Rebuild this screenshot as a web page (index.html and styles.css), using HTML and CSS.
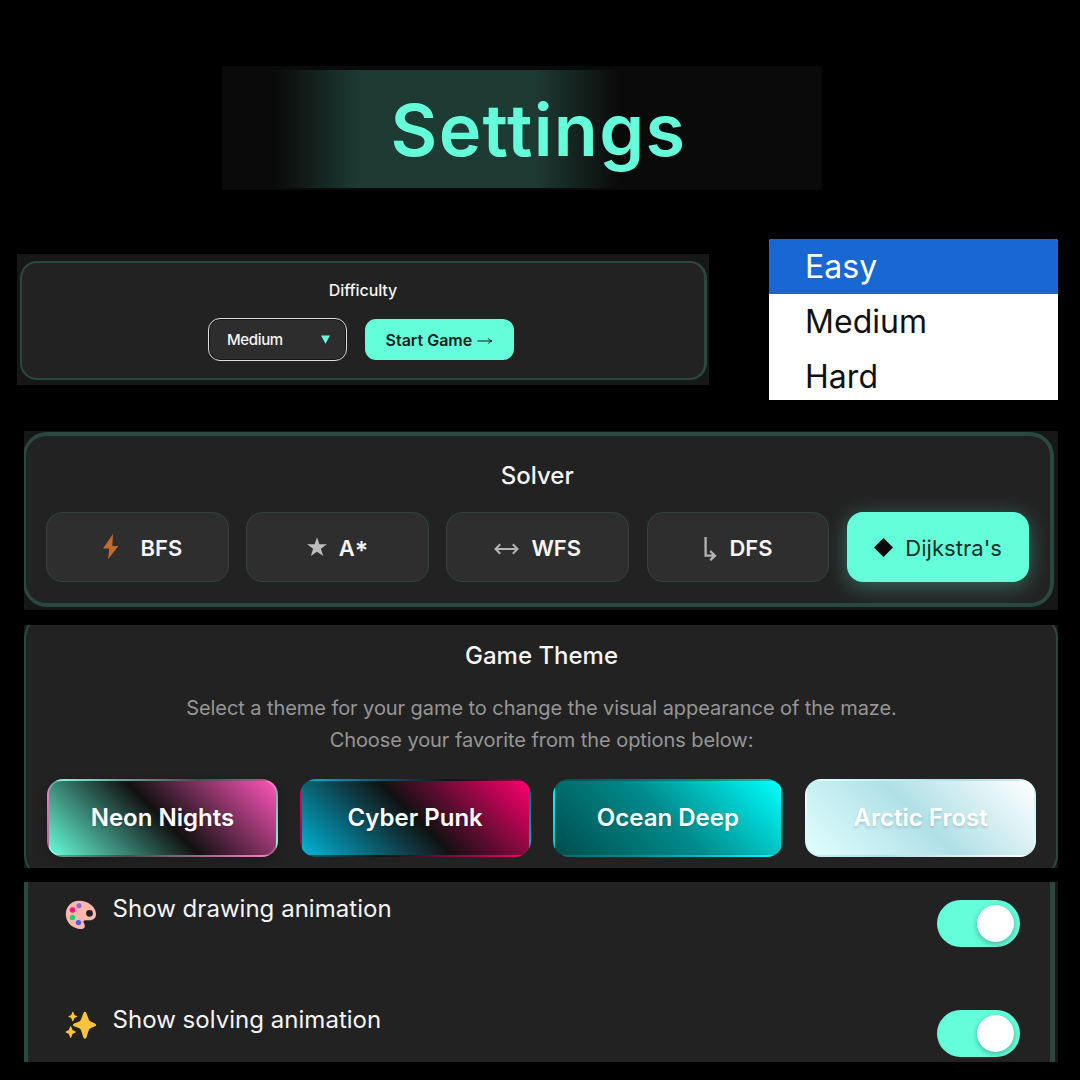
FILE: index.html
```html
<!DOCTYPE html>
<html lang="en">
<head>
<meta charset="utf-8">
<title>Settings</title>
<link rel="stylesheet" href="styles.css">
</head>
<body>
<header class="banner"><h1 class="banner-title">Settings</h1></header>

<div class="top-row">
  <section class="frame frame-difficulty">
    <div class="card card-difficulty">
      <h2 class="small-title">Difficulty</h2>
      <div class="controls">
        <button class="select"><span>Medium</span>
          <svg width="9" height="9" viewBox="0 0 9 9"><path d="M0 .5h9L4.5 8.8z" fill="#64ffda"/></svg>
        </button>
        <button class="start">Start Game
          <svg width="16" height="8" viewBox="0 0 16 8"><path d="M.5 5h14M11.3 2.400Q12.500 4.600 15 5Q12.500 5.400 11.300 7.600" fill="none" stroke="#0d1f1b" stroke-width="1"/></svg>
        </button>
      </div>
    </div>
  </section>
  <ul class="options">
    <li class="option option-active">Easy</li>
    <li class="option">Medium</li>
    <li class="option">Hard</li>
  </ul>
</div>

<section class="frame frame-solver">
  <div class="card card-solver">
    <h2 class="title">Solver</h2>
    <div class="solvers">
      <button class="solver"><svg width="36" height="28" viewBox="0 0 36 28"><path d="M21 1 11 15.6h6.2L16.2 26.3 26.3 13h-6z" fill="#c56a2c"/></svg><span>BFS</span></button>
      <button class="solver"><svg width="20" height="20" viewBox="0 0 20 20"><path d="M10 .2l2.400 7.100h7.500l-6 4.500 2.300 7.200L10 14.700l-6.200 4.300 2.300-7.200-6-4.500h7.500z" fill="#bdbdbd"/></svg><span class="star-label">A<span class="asterisk">*</span></span></button>
      <button class="solver"><svg class="low" width="25" height="12" viewBox="0 0 25 12"><path d="M1.5 6h22M6.2 1.2 1.5 6l4.7 4.8M18.8 1.2 23.5 6l-4.7 4.8" fill="none" stroke="#b4b4b4" stroke-width="2"/></svg><span>WFS</span></button>
      <button class="solver"><svg class="low" width="14" height="24" viewBox="0 0 14 24"><path d="M2.600 0v18.700h9M7.200 14l4.800 4.700-4.800 4.500" fill="none" stroke="#b4b4b4" stroke-width="2.300"/></svg><span>DFS</span></button>
      <button class="solver solver-active"><svg width="19" height="19" viewBox="0 0 19 19"><path d="M9.5 0 19 9.5 9.5 19 0 9.5z" fill="#0a0a0a"/></svg><span>Dijkstra's</span></button>
    </div>
  </div>
</section>

<section class="frame frame-theme">
  <div class="card card-theme">
    <h2 class="title">Game Theme</h2>
    <p class="hint">Select a theme for your game to change the visual appearance of the maze.<br>Choose your favorite from the options below:</p>
    <div class="themes">
      <button class="theme neon">Neon Nights</button>
      <button class="theme cyber">Cyber Punk</button>
      <button class="theme ocean">Ocean Deep</button>
      <button class="theme arctic">Arctic Frost</button>
    </div>
  </div>
</section>

<section class="frame frame-toggles">
  <div class="card card-toggles">
    <div class="row">
      <svg class="row-icon" width="32" height="30" viewBox="0 0 32 30"><path fill-rule="evenodd" fill="#ffb8ab" d="M14 .7C22 .5 30.7 6 31 13.5c.2 4.500-2.500 6.800-6.500 6.800h-3.800c-2.400 0-2.800 1.600-1.600 3.200 1.700 2.400.6 5.600-3 5.600C7.500 29 .8 22.600.8 14.300.8 6.500 6.300.9 14 .7zM24.500 9.900a3.400 3.400 0 1 0 0 6.800 3.400 3.400 0 0 0 0-6.800z"/><circle cx="14" cy="5.700" r="2.500" fill="#9068c8"/><circle cx="7.500" cy="10" r="2.700" fill="#ff0a90"/><circle cx="7.500" cy="17.500" r="2.600" fill="#00d26a"/><circle cx="13.500" cy="22.600" r="2.700" fill="#4460f5"/></svg>
      <span class="row-label">Show drawing animation</span>
      <span class="toggle"><span class="knob"></span></span>
    </div>
    <div class="row">
      <svg class="row-icon" width="32" height="30" viewBox="0 0 32 30"><path fill="#fcc43c" d="M18.400 2c.8-1.800 2.200-1.800 3 0l2.400 6.500c.5 1.200 1 1.700 2.200 2.200l4 1.800c1.600.8 1.600 2 0 2.800l-4 1.700c-1.200.5-1.700 1-2.200 2.200L21.400 26.400c-.8 1.800-2.200 1.800-3 0L16 19.200c-.5-1.200-1-1.700-2.200-2.200l-4.700-1.700c-1.600-.8-1.600-2 0-2.800l4.700-1.800c1.200-.5 1.700-1 2.200-2.200zM7.800.600c.5.1 1.300 3 1.800 3.500s2.900 1.100 2.900 1.500-2.400 1-2.900 1.500-1.400 3.500-1.800 3.500-1.200-3-1.700-3.500-2.900-1.100-2.900-1.500 2.400-1 2.900-1.500S7.400.600 7.800.600zM5.700 15c.5 0 1.500 3.500 2 4s3.300 1.400 3.300 1.900-2.800 1.300-3.300 1.900-1.500 4.300-2 4.300-1.500-3.700-2-4.300-3.200-1.400-3.200-1.900 2.700-1.400 3.200-1.900 1.500-4 2-4z"/></svg>
      <span class="row-label">Show solving animation</span>
      <span class="toggle"><span class="knob"></span></span>
    </div>
  </div>
</section>
</body>
</html>
```
FILE: styles.css
```css
* { box-sizing: border-box; }

body {
  margin: 0;
  width: 1080px;
  height: 1080px;
  padding-top: 66px;
  overflow: hidden;
  background: #000;
  color: #f5f5f5;
  font-family: Inter, "Liberation Sans", sans-serif;
}

h1, h2, p, ul { margin: 0; padding: 0; font-weight: 500; }
button { font: inherit; color: inherit; border: 0; padding: 0; white-space: nowrap; }
svg { display: block; flex: none; }

.banner {
  width: 600px;
  height: 124px;
  margin-left: 222px;
  padding: 4px 0 2px;
  background: #0a0a0a;
}

.banner-title {
  height: 118px;
  padding-left: 168.500px;
  background: linear-gradient(90deg, transparent 52px, #1e3b33 138px, #1e3b33 312px, transparent 398px);
  color: #64ffda;
  font-size: 72px;
  font-weight: 560;
  letter-spacing: 1.300px;
  line-height: 119px;
}

.top-row {
  display: flex;
  align-items: flex-start;
  justify-content: space-between;
  height: 161px;
  margin: 49px 22px 0 17px;
}

.frame { overflow: hidden; background: #171717; }
.card { background: #222; border: 3px solid #284840; }

.frame-difficulty { width: 692px; height: 131px; margin-top: 15px; padding: 7px 2px 5px 3px; }
.card-difficulty { height: 119px; border-width: 2px 3px 2px 2px; border-radius: 17px; text-align: center; }
.small-title { padding-top: 17px; font-size: 16px; line-height: 20px; letter-spacing: -.1px; }

.controls { display: flex; gap: 18px; margin: 18px 0 0 186px; align-items: center; }

.select {
  display: flex;
  align-items: center;
  justify-content: space-between;
  width: 139px;
  height: 43px;
  padding: 0 16px 0 18px;
  border: 1px solid #ddd;
  border-radius: 12px;
  background: #2d2d2d;
  box-shadow: inset 0 0 0 1px #151515;
  font-size: 15px;
  font-weight: 500;
  letter-spacing: -.35px;
}

.start {
  display: flex;
  align-items: center;
  gap: 5px;
  width: 149px;
  height: 41px;
  padding-left: 20.500px;
  border-radius: 11px;
  background: #64ffda;
  color: #0d1f1b;
  font-size: 16px;
  font-weight: 600;
}

.options { width: 289px; height: 161px; background: #fff; overflow: hidden; list-style: none; border-radius: 3px 3px 0 0; }
.option { height: 55px; padding-left: 36px; color: #111; font-size: 32px; font-weight: 400; line-height: 55px; letter-spacing: .05px; }
.option-active { background: #1967d2; color: #fff; }

.frame-solver { height: 179px; margin: 31px 22px 0 24px; padding: 1px 4px 3px 0; }
.card-solver { height: 175px; margin-left: -1px; padding: 25px 20.500px 0 19px; border-width: 4px; border-left-width: 3px; border-radius: 24px; }
.card-solver .solvers { margin-left: 1px; }

.title { font-size: 24px; line-height: 30px; text-align: center; }

.solvers { display: grid; grid-template-columns: repeat(5, 1fr); gap: 17.5px; margin-top: 21px; }

.solver {
  display: flex;
  align-items: center;
  justify-content: center;
  gap: 12px;
  height: 70px;
  border: 1px solid #2f443e;
  border-radius: 16px;
  background: #2e2e2e;
  font-size: 22px;
  font-weight: 600;
}

.solver > span { padding-top: 1px; }
.solver > .star-label { padding-top: 4px; }
.asterisk { font-size: 25px; line-height: 1; vertical-align: -4px; }

.solver-active {
  border: 0;
  background: #64ffda;
  color: #123029;
  font-weight: 400;
  letter-spacing: .05px;
  box-shadow: 0 4px 22px rgba(100, 255, 218, .34);
}

.low { transform: translateY(2px); }

.frame-theme { height: 243px; margin: 15px 22px 0 24px; }
.card-theme { height: 265px; margin-top: -11px; padding: 24px 20px 0 21px; border-width: 2px; border-top-width: 3px; border-radius: 24px; }

.hint { margin-top: 21px; color: #969696; font-size: 20px; font-weight: 400; line-height: 32px; letter-spacing: -.07px; text-align: center; }

.themes { display: grid; grid-template-columns: repeat(4, 1fr); gap: 22px; margin-top: 23px; }

.theme {
  height: 78px;
  padding-bottom: 1px;
  border: 2px solid transparent;
  border-radius: 16px;
  font-size: 24px;
  font-weight: 600;
  color: #fff;
  text-shadow: 0 2px 3px rgba(0, 0, 0, .14);
}

/* The gradients tile under the transparent border, so each edge shows the opposite end. */
.neon { background-image: linear-gradient(45deg, #64ffda, #111, #ff55bb); border-color: rgba(255, 255, 255, .25); box-shadow: 0 4px 12px rgba(0, 0, 0, .2); }
.cyber { background-image: linear-gradient(45deg, #00b4d8, #111, #ff006e); }
.ocean { background-image: linear-gradient(45deg, #004d4d, #008b8b, #00ffff); }
.arctic { background-image: linear-gradient(45deg, #e0ffff, #b0e0e6, #fff); }

.frame-toggles { height: 180px; margin: 14px 22px 0 24px; padding-right: 3px; }
.card-toggles {
  height: 180px;
  padding: 18px 30px 0 37px;
  border-width: 0 5px 0 4px;
}

.row { display: flex; height: 110px; align-items: flex-start; }
.row-label { margin-left: 15.500px; margin-top: -6px; font-size: 24px; line-height: 30px; letter-spacing: .03px; }
.row + .row .row-icon { margin-top: 1px; }
.row + .row .row-label { margin-top: -5px; }

.toggle {
  display: flex;
  width: 83px;
  height: 47px;
  margin-left: auto;
  padding: 5px 6px 0 0;
  justify-content: flex-end;
  border-radius: 24px;
  background: #64ffda;
}

.knob { width: 37px; height: 37px; border-radius: 50%; background: #fff; box-shadow: 0 2px 6px rgba(0, 0, 0, .3); }
```
